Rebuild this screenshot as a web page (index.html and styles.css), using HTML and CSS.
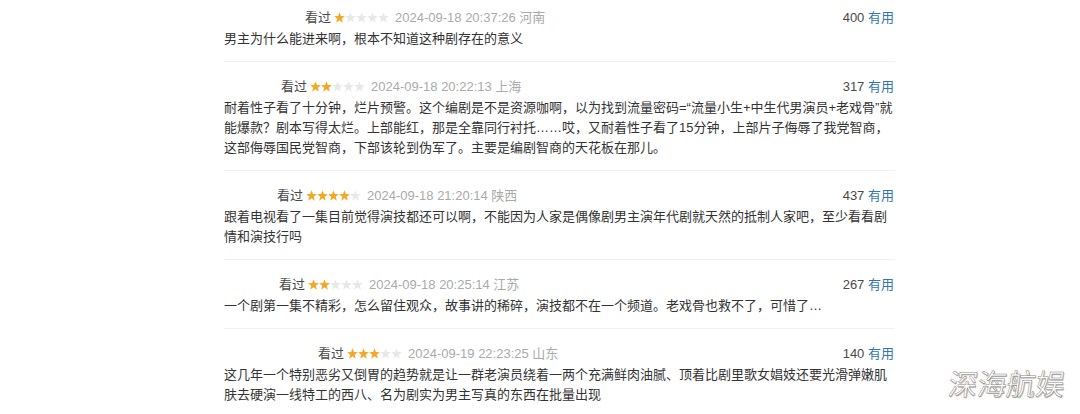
FILE: index.html
```html
<!DOCTYPE html>
<html lang="zh-CN">
<head>
    <meta charset="UTF-8" />
    <meta name="viewport" content="width=device-width, initial-scale=1" />
    <title>短评</title>
    <link rel="stylesheet" href="styles.css">
</head>
<body>
<svg class="defs" width="0" height="0">
    <symbol id="star" viewBox="0 0 10 10">
        <polygon points="5,0.3 6.25,3.7 9.9,3.8 7,6.05 8.05,9.7 5,7.6 1.95,9.7 3,6.05 0.1,3.8 3.75,3.7" />
    </symbol>
</svg>
<main class="comments">
    <div class="comment">
        <div class="comment-info">
            <div class="meta">
                <span class="user u1"></span>
                <span class="watched">看过</span>
                <svg class="rating" width="55" height="11">
                    <use href="#star" x="0" width="11" height="11" class="on" />
                    <use href="#star" x="11" width="11" height="11" />
                    <use href="#star" x="22" width="11" height="11" />
                    <use href="#star" x="33" width="11" height="11" />
                    <use href="#star" x="44" width="11" height="11" />
                </svg>
                <span class="time">2024-09-18 20:37:26 河南</span>
            </div>
            <div class="votes"><span class="count">400</span> <a href="#">有用</a></div>
        </div>
        <p class="short">男主为什么能进来啊，根本不知道这种剧存在的意义</p>
    </div>

    <div class="comment">
        <div class="comment-info">
            <div class="meta">
                <span class="user u2"></span>
                <span class="watched">看过</span>
                <svg class="rating" width="55" height="11">
                    <use href="#star" x="0" width="11" height="11" class="on" />
                    <use href="#star" x="11" width="11" height="11" class="on" />
                    <use href="#star" x="22" width="11" height="11" />
                    <use href="#star" x="33" width="11" height="11" />
                    <use href="#star" x="44" width="11" height="11" />
                </svg>
                <span class="time">2024-09-18 20:22:13 上海</span>
            </div>
            <div class="votes"><span class="count">317</span> <a href="#">有用</a></div>
        </div>
        <p class="short">耐着性子看了十分钟，烂片预警。这个编剧是不是资源咖啊，以为找到流量密码=“流量小生+中生代男演员+老戏骨”就能爆款？剧本写得太烂。上部能红，那是全靠同行衬托……哎，又耐着性子看了15分钟，上部片子侮辱了我党智商，这部侮辱国民党智商，下部该轮到伪军了。主要是编剧智商的天花板在那儿。</p>
    </div>

    <div class="comment">
        <div class="comment-info">
            <div class="meta">
                <span class="user u3"></span>
                <span class="watched">看过</span>
                <svg class="rating" width="55" height="11">
                    <use href="#star" x="0" width="11" height="11" class="on" />
                    <use href="#star" x="11" width="11" height="11" class="on" />
                    <use href="#star" x="22" width="11" height="11" class="on" />
                    <use href="#star" x="33" width="11" height="11" class="on" />
                    <use href="#star" x="44" width="11" height="11" />
                </svg>
                <span class="time">2024-09-18 21:20:14 陕西</span>
            </div>
            <div class="votes"><span class="count">437</span> <a href="#">有用</a></div>
        </div>
        <p class="short">跟着电视看了一集目前觉得演技都还可以啊，不能因为人家是偶像剧男主演年代剧就天然的抵制人家吧，至少看看剧情和演技行吗</p>
    </div>

    <div class="comment">
        <div class="comment-info">
            <div class="meta">
                <span class="user u4"></span>
                <span class="watched">看过</span>
                <svg class="rating" width="55" height="11">
                    <use href="#star" x="0" width="11" height="11" class="on" />
                    <use href="#star" x="11" width="11" height="11" class="on" />
                    <use href="#star" x="22" width="11" height="11" />
                    <use href="#star" x="33" width="11" height="11" />
                    <use href="#star" x="44" width="11" height="11" />
                </svg>
                <span class="time">2024-09-18 20:25:14 江苏</span>
            </div>
            <div class="votes"><span class="count">267</span> <a href="#">有用</a></div>
        </div>
        <p class="short">一个剧第一集不精彩，怎么留住观众，故事讲的稀碎，演技都不在一个频道。老戏骨也救不了，可惜了…</p>
    </div>

    <div class="comment">
        <div class="comment-info">
            <div class="meta">
                <span class="user u5"></span>
                <span class="watched">看过</span>
                <svg class="rating" width="55" height="11">
                    <use href="#star" x="0" width="11" height="11" class="on" />
                    <use href="#star" x="11" width="11" height="11" class="on" />
                    <use href="#star" x="22" width="11" height="11" class="on" />
                    <use href="#star" x="33" width="11" height="11" />
                    <use href="#star" x="44" width="11" height="11" />
                </svg>
                <span class="time">2024-09-19 22:23:25 山东</span>
            </div>
            <div class="votes"><span class="count">140</span> <a href="#">有用</a></div>
        </div>
        <p class="short">这几年一个特别恶劣又倒胃的趋势就是让一群老演员绕着一两个充满鲜肉油腻、顶着比剧里歌女娼妓还要光滑弹嫩肌肤去硬演一线特工的西八、名为剧实为男主写真的东西在批量出现</p>
    </div>
</main>
<div class="watermark">深海航娱</div>
</body>
</html>
```

FILE: styles.css
```css
/* Base */
* {
    box-sizing: border-box;
}
body {
    margin: 0;
    height: 414px;
    overflow: hidden;
    background: #fff;
    font-family: "Liberation Sans", "Noto Sans CJK SC", sans-serif;
    font-size: 13px;
    color: #333;
}
.defs {
    position: absolute;
}
.comments {
    width: 671px;
    margin: -7px 0 0 224px;
}
.comment {
    padding: 14px 0 12px;
    border-bottom: 1px solid #f0f0f0;
}
.comment-info {
    display: flex;
    justify-content: space-between;
    align-items: center;
    height: 22px;
    line-height: 22px;
}
.meta {
    display: flex;
    align-items: center;
}
/* usernames are blanked in the capture */
.user {
    display: inline-block;
    height: 1px;
}
.u1 { width: 81px; }
.u2 { width: 57px; }
.u3 { width: 53px; }
.u4 { width: 55px; }
.u5 { width: 94px; }
.watched {
    color: #494949;
}
.rating {
    margin: 0 6px 1px 3px;
    fill: #e8e8e8;
}
.rating .on {
    fill: #f5a623;
}
.time {
    color: #aaa;
}
.votes {
    color: #494949;
    margin-right: 1px;
}
.votes a {
    color: #37a;
    text-decoration: none;
}
.short {
    margin: 0;
    line-height: 20px;
    color: #333;
}
.watermark {
    position: absolute;
    right: 15px;
    bottom: 11px;
    font-family: "Noto Sans CJK SC", sans-serif;
    font-size: 29px;
    letter-spacing: 0;
    color: #fff;
    -webkit-text-stroke: 0.5px #8a8a8a;
    text-shadow: 1px 1px 1px rgba(0,0,0,0.35);
    transform: skewX(-8deg);
}
```
